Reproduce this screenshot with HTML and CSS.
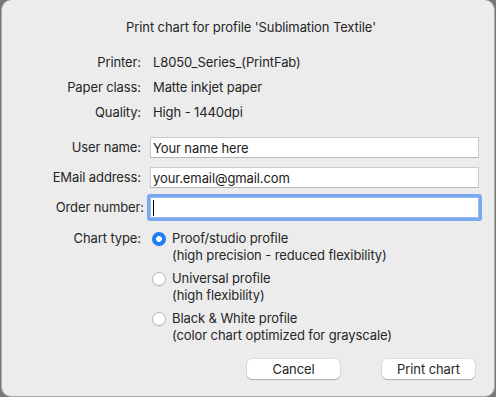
FILE: index.html
```html
<!DOCTYPE html>
<html lang="en">
<head>
    <meta charset="UTF-8">
    <meta name="viewport" content="width=device-width, initial-scale=1.0">
    <title>Print chart</title>
    <link rel="stylesheet" href="styles.css">
</head>
<body>
    <div class="dialog">
        <h1 class="title">Print chart for profile 'Sublimation Textile'</h1>

        <div class="info">
            <div class="row"><span class="label">Printer:</span><span class="value">L8050_Series_(PrintFab)</span></div>
            <div class="row"><span class="label">Paper class:</span><span class="value">Matte inkjet paper</span></div>
            <div class="row"><span class="label">Quality:</span><span class="value">High - 1440dpi</span></div>
        </div>

        <div class="fields">
            <div class="row">
                <label class="label" for="userName">User name:</label>
                <input class="field" id="userName" type="text" value="Your name here">
            </div>
            <div class="row">
                <label class="label" for="email">EMail address:</label>
                <input class="field" id="email" type="text" value="your.email@gmail.com">
            </div>
            <div class="row">
                <label class="label label-order" for="orderNumber">Order number:</label>
                <div class="field-wrap">
                    <input class="field focused" id="orderNumber" type="text">
                    <span class="caret"></span>
                </div>
            </div>
        </div>

        <div class="row chart">
            <span class="label">Chart type:</span>
            <div class="options">
                <div class="option">
                    <span class="radio checked"></span>
                    <span class="option-text">Proof/studio profile<br>(high precision - reduced flexibility)</span>
                </div>
                <div class="option">
                    <span class="radio"></span>
                    <span class="option-text">Universal profile<br>(high flexibility)</span>
                </div>
                <div class="option">
                    <span class="radio"></span>
                    <span class="option-text">Black &amp; White profile<br>(color chart optimized for grayscale)</span>
                </div>
            </div>
        </div>

        <div class="buttons">
            <button class="btn">Cancel</button>
            <button class="btn">Print chart</button>
        </div>
    </div>
</body>
</html>
```

FILE: styles.css
```css
body {
    margin: 0;
    background-color: #737b73;
    font-family: Inter, "Liberation Sans", Arial, sans-serif;
    font-size: 13px;
    line-height: 17px;
    letter-spacing: -0.1px;
    color: #262626;
}
.dialog {
    box-sizing: border-box;
    width: 494px;
    height: 397px;
    margin-left: 1px;
    background-color: #ececec;
    border: 1px solid #a9a9a9;
    border-top: none;
    border-radius: 10px;
    display: flex;
    flex-direction: column;
}
.title {
    margin: 19px 0 0;
    padding-left: 6px;
    font-size: 13px;
    font-weight: normal;
    text-align: center;
}
.row {
    display: grid;
    grid-template-columns: 139px 1fr;
    column-gap: 9px;
    align-items: center;
    padding-right: 15px;
}
.label {
    text-align: right;
}
.label-order {
    margin-right: -3px;
}
.value {
    padding-left: 3px;
}
.info {
    margin-top: 18px;
    display: flex;
    flex-direction: column;
    gap: 8px;
}
.fields {
    margin-top: 16px;
    display: flex;
    flex-direction: column;
    gap: 9px;
}
.field {
    box-sizing: border-box;
    width: 100%;
    height: 21px;
    margin: 0;
    padding: 0 2px;
    border: 1px solid #cbcbcb;
    border-bottom-color: #b9b9b9;
    border-radius: 0;
    background-color: #fff;
    font-family: inherit;
    font-size: 13px;
    letter-spacing: inherit;
    color: #1a1a1a;
    outline: none;
}
.field-wrap {
    position: relative;
}
.field.focused {
    border-color: #9ab8ea;
    border-radius: 1px;
    box-shadow: 0 0 0 3px #78a8f0;
}
.caret {
    position: absolute;
    left: 3px;
    top: 3px;
    width: 1px;
    height: 16px;
    background-color: #000;
}
.chart {
    margin-top: 12px;
    align-items: start;
}
.options {
    display: flex;
    flex-direction: column;
    gap: 6px;
}
.option {
    display: flex;
    gap: 6px;
    padding-left: 2px;
}
.radio {
    box-sizing: border-box;
    flex: none;
    width: 14px;
    height: 14px;
    margin-top: 2px;
    border-radius: 50%;
    background-color: #fff;
    border: 1px solid #b9b9b9;
    box-shadow: 0 0.5px 1px rgba(0, 0, 0, 0.12);
}
.radio.checked {
    border: none;
    background: radial-gradient(circle, #fff 0, #fff 2.6px, #1f7bf6 3.2px);
}
.buttons {
    margin-top: 15px;
    display: flex;
    justify-content: flex-end;
    gap: 42px;
    padding-right: 19px;
}
.btn {
    width: 93px;
    height: 20px;
    padding: 0;
    border: none;
    border-radius: 5px;
    background-color: #fff;
    box-shadow: 0 0 0 0.5px rgba(0, 0, 0, 0.12), 0 1px 1px rgba(0, 0, 0, 0.22);
    font-family: inherit;
    font-size: 13px;
    letter-spacing: inherit;
    color: #262626;
}
```
